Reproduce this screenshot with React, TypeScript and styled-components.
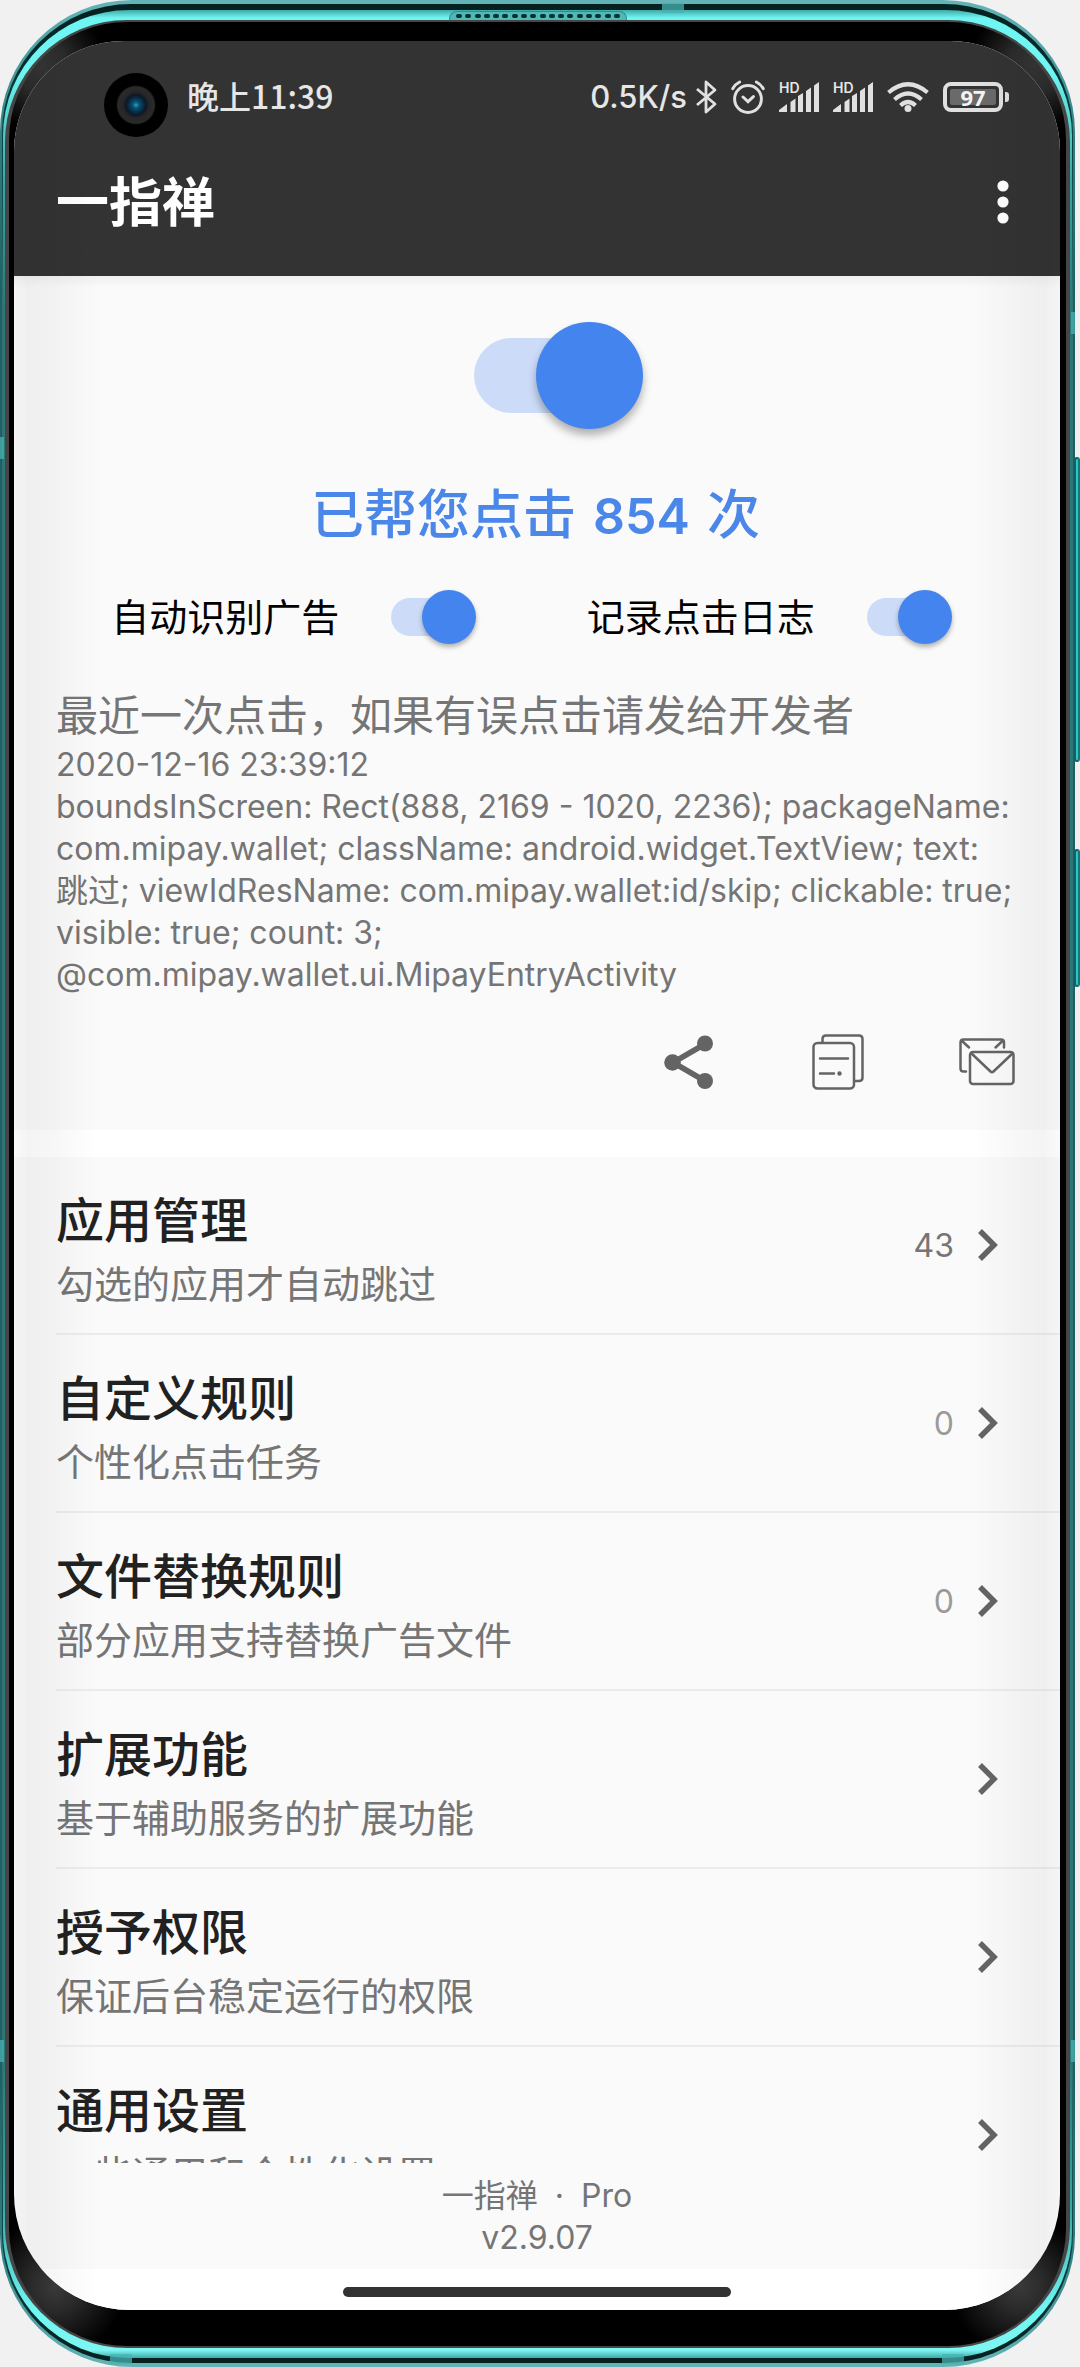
import React from "react";
import styled, { createGlobalStyle, css } from "styled-components";

const GlobalStyle = createGlobalStyle`
  * { box-sizing: border-box; }
  body {
    margin: 0;
    background: #f1f1f1;
    font-family: "Inter", "Noto Sans CJK SC", sans-serif;
    color: #757575;
  }
`;

/* ---------- device shell ---------- */

const Device = styled.div`
  position: relative;
  height: 100vh;
  padding-right: 5px;
  overflow: hidden;
`;

const Rim = styled.div`
  height: 100%;
  padding: 4px 2px;
  border-radius: 132px;
  background: linear-gradient(#62b4b7, #2f7f80 140px, #1f6061 300px, #1f6061 calc(100% - 300px), #2f7f80 calc(100% - 120px), #62b4b7);
`;

const Groove = styled.div`
  height: 100%;
  padding: 6px 1px 5px;
  border-radius: 129px;
  background: linear-gradient(#05201f, #0d4746 160px, #2f7375 300px, #2f7375 calc(100% - 300px), #0d4746 calc(100% - 140px), #05201f);
`;

const Gloss = styled.div`
  height: 100%;
  padding: 10px 2px;
  border-radius: 126px;
  background: linear-gradient(#3fa9a8, #6ff6f3 8px, #6ff6f3 60px, #37a9a8 170px, #2b7779 300px, #2b7779 calc(100% - 300px), #37a9a8 calc(100% - 150px), #6ff6f3 calc(100% - 50px), #7ef6f2 calc(100% - 8px), #3fa9a8);
`;

const Edge = styled.div`
  height: 100%;
  padding: 2px 4px;
  border-radius: 122px;
  background: #464646;
`;

const Bezel = styled.div`
  height: 100%;
  padding: 19px 6px 36px 5px;
  border-radius: 118px;
  background:
    radial-gradient(circle at 32px 44px, #333 0, #2a2a2a 26px, transparent 64px),
    radial-gradient(circle at calc(100% - 32px) 44px, #333 0, #2a2a2a 26px, transparent 64px),
    radial-gradient(circle at 46px calc(100% - 60px), #3a3a3a 0, #2a2a2a 24px, transparent 70px),
    radial-gradient(circle at calc(100% - 46px) calc(100% - 60px), #3a3a3a 0, #2a2a2a 24px, transparent 70px),
    #000;
`;

const Screen = styled.div`
  position: relative;
  display: flex;
  flex-direction: column;
  height: 100%;
  overflow: hidden;
  border-radius: 110px 110px 116px 116px;
  background: #fafafa;

  &::after {
    content: "";
    position: absolute;
    inset: 0;
    pointer-events: none;
    background:
      linear-gradient(to right, rgba(0, 0, 0, 0.02), rgba(0, 0, 0, 0.045) 14px, rgba(0, 0, 0, 0.03) 40px, transparent 84px),
      linear-gradient(to left, rgba(0, 0, 0, 0.02), rgba(0, 0, 0, 0.045) 16px, rgba(0, 0, 0, 0.03) 40px, transparent 88px);
  }
`;

const Camera = styled.div`
  position: absolute;
  z-index: 1;
  top: 32px;
  left: 90px;
  width: 64px;
  height: 64px;
  border-radius: 50%;
  background: radial-gradient(circle, #2aa4c8 0, #0b5573 3px, #06304a 7px, #0d1826 10px, #262626 13px, #2b2b2b 18px, #000 20px);
`;

const SideKey = styled.div<{ $top: string; $height: string }>`
  position: absolute;
  right: 0;
  top: ${(p) => p.$top};
  width: 6px;
  height: ${(p) => p.$height};
  border: 2px solid #0f6366;
  border-right-color: #11777a;
  border-radius: 3px;
  background: #2fc4c5;
`;

const Antenna = styled.div<{ $side: "left" | "right" | "top" | "bottom"; $at: string }>`
  position: absolute;
  background: rgba(72, 178, 178, 0.75);
  ${(p) =>
    p.$side === "left" || p.$side === "right"
      ? css`
          ${p.$side}: ${p.$side === "right" ? "5px" : "0"};
          top: ${p.$at};
          width: 4px;
          height: 22px;
        `
      : css`
          ${p.$side}: 3px;
          left: ${p.$at};
          width: 22px;
          height: 10px;
        `}
`;

const Earpiece = styled.div`
  position: absolute;
  top: 11px;
  left: calc(50% - 91px);
  width: 178px;
  height: 9px;
  padding: 2px 6px;
  display: flex;
  justify-content: space-between;
  border-radius: 8px 8px 0 0;
  border: 1px solid #2a8f90;
  border-bottom: 0;
  background: #4fb9b8;
`;

const Hole = styled.i`
  width: 6px;
  height: 4px;
  border-radius: 2px;
  background: #06302f;
`;

/* ---------- status and title bars ---------- */

const TopBars = styled.header`
  background: #333;
  color: #fff;
`;

const StatusBar = styled.div`
  display: flex;
  align-items: center;
  justify-content: space-between;
  height: 88px;
  padding: 24px 51px 0 173px;
  color: #e6e6e6;
`;

const Clock = styled.time`
  padding-bottom: 4px;
  font: 500 32px/40px "Noto Sans CJK SC", sans-serif;
`;

const StatusIcons = styled.div`
  display: flex;
  align-items: center;
  gap: 14px;
`;

const Speed = styled.span`
  margin-right: -6px;
  font-size: 31px;
  line-height: 40px;
  font-weight: 500;
`;

const Signal = styled.span`
  position: relative;
  display: flex;

  span {
    position: absolute;
    top: 0;
    left: 0;
    font-size: 14px;
    line-height: 12px;
    font-weight: 600;
  }
`;

const Battery = styled.span`
  display: flex;
  align-items: center;
  gap: 2px;

  &::after {
    content: "";
    width: 4px;
    height: 10px;
    border-radius: 0 3px 3px 0;
    background: #e0e0e0;
  }
`;

const BatteryBody = styled.span`
  width: 60px;
  height: 30px;
  padding: 3px;
  border: 4px solid #e0e0e0;
  border-radius: 8px;
`;

const BatteryLevel = styled.span`
  display: block;
  height: 16px;
  border-radius: 2px;
  background: #6a6a6a;
  color: #f4f4f4;
  font: 700 22px/16px "Noto Sans", sans-serif;
  text-align: center;
`;

const TitleBar = styled.div`
  display: flex;
  align-items: center;
  justify-content: space-between;
  height: 147px;
  padding: 0 41px 0 42px;
`;

const AppTitle = styled.h1`
  margin: 0;
  font-size: 53px;
  line-height: 72px;
  font-weight: 600;
`;

const IconButton = styled.button`
  display: grid;
  place-items: center;
  width: 56px;
  height: 56px;
  padding: 0;
  border: 0;
  background: none;
  color: #646464;

  svg { display: block; }
`;

const MenuButton = styled(IconButton)`
  width: 32px;
  color: #fff;
`;

/* ---------- summary ---------- */

const Summary = styled.section`
  padding: 46px 45px 40px 42px;
  background: linear-gradient(#f0f0f0, #fafafa 12px);
`;

const Switch = styled.input<{ $size: number }>`
  appearance: none;
  position: relative;
  flex: none;
  display: block;
  width: ${(p) => Math.round(p.$size * 1.58)}px;
  height: ${(p) => p.$size}px;
  margin: 0;

  &::before {
    content: "";
    position: absolute;
    top: 15%;
    left: 0;
    width: 80%;
    height: 70%;
    border-radius: 999px;
    background: #ccdcf8;
  }

  &::after {
    content: "";
    position: absolute;
    top: 0;
    right: 0;
    width: ${(p) => p.$size}px;
    height: ${(p) => p.$size}px;
    border-radius: 50%;
    background: #4484ee;
    box-shadow: 0 ${(p) => Math.round(p.$size / 18)}px ${(p) => Math.round(p.$size / 12)}px rgba(0, 0, 0, 0.3);
  }
`;

const MainSwitch = styled.label`
  display: flex;
  justify-content: center;
  padding-left: 46px;
`;

const Total = styled.p`
  margin: 50px 0 0;
  color: #4a87e8;
  font-size: 53px;
  line-height: 72px;
  font-weight: 500;
  text-align: center;

  strong {
    padding: 0 3px;
    font-size: 50px;
    font-weight: 600;
  }
`;

const Options = styled.div`
  display: grid;
  grid-template-columns: 1fr 1fr;
  margin: 38px 8px 0 0;
`;

const Option = styled.label`
  display: flex;
  align-items: center;
  justify-content: center;
  gap: 52px;
  color: #000;
  font-size: 38px;
  line-height: 54px;
`;

const LogTitle = styled.h2`
  margin: 44px 0 0;
  font-size: 42px;
  line-height: 56px;
  font-weight: 400;
`;

const LogText = styled.p`
  margin: 0;
  font-size: 32px;
  line-height: 42px;
  overflow-wrap: break-word;
`;

const Actions = styled.div`
  display: flex;
  justify-content: flex-end;
  gap: 93px;
  margin-top: 38px;
`;

/* ---------- menu ---------- */

const Menu = styled.nav`
  flex: 1;
  min-height: 0;
  overflow: hidden;
  border-top: 27px solid #fff;
`;

const Row = styled.a`
  display: flex;
  align-items: center;
  height: 178px;
  margin-left: 42px;
  padding-right: 62px;
  border-bottom: 2px solid #ececec;
  text-decoration: none;
  color: #757575;
`;

const RowText = styled.span`
  flex: 1;
  display: grid;
  gap: 9px;
  padding-top: 8px;
`;

const RowTitle = styled.span`
  color: #212121;
  font-size: 48px;
  line-height: 60px;
  font-weight: 500;
`;

const RowHint = styled.span`
  font-size: 38px;
  line-height: 48px;
`;

const Count = styled.span<{ $empty: boolean }>`
  padding-top: 2px;
  margin-right: 24px;
  font-size: 32px;
  line-height: 42px;
  color: ${(p) => (p.$empty ? "#9a9a9a" : "#757575")};
`;

/* ---------- footer ---------- */

const Footer = styled.footer`
  padding: 12px 0 10px;
  font-size: 32px;
  line-height: 42px;
  text-align: center;
`;

const Dot = styled.span`
  padding: 0 8px;
`;

const GestureBar = styled.div`
  display: flex;
  justify-content: center;
  height: 41px;
  padding-top: 18px;
  background: #fff;

  &::before {
    content: "";
    width: 37%;
    height: 10px;
    border-radius: 5px;
    background: #333;
  }
`;

/* ---------- icons ---------- */

const Bluetooth = () => (
  <svg width="22" height="34" viewBox="0 0 22 34" fill="none" stroke="#e0e0e0" strokeWidth="2.8" strokeLinejoin="round">
    <path d="M2 9l18 15-9 8V2l9 8L2 25" />
  </svg>
);

const Alarm = () => (
  <svg width="34" height="34" viewBox="0 0 34 34" fill="none" stroke="#e0e0e0" strokeWidth="3" strokeLinecap="round">
    <circle cx="17" cy="19" r="13.4" />
    <path d="M12 17l5 4.6 5.4-5M1.8 8.6Q4.4 4 8.6 2M32.2 8.6Q29.6 4 25.4 2" />
  </svg>
);

const SignalBars = () => (
  <Signal>
    <span>HD</span>
    <svg width="40" height="30" viewBox="0 0 40 30" fill="#e0e0e0">
      <path d="M0 30v-2l8-6v8zM11.500 30V20l5-3.500v13.500zM19 30V14l5-3v19zM27 30V9l5-3.500v24.500zM35 30V3.500l5-3.500v30z" />
    </svg>
  </Signal>
);

const Wifi = () => (
  <svg width="42" height="30" viewBox="0 0 42 30" fill="none" stroke="#e0e0e0" strokeWidth="4.2">
    <path d="M1.500 10.500Q21-6 40.500 10.500M7.500 17.500Q21 5.500 34.500 17.500M13.500 23.500Q21 16.500 28.500 23.500" />
    <circle cx="21" cy="26.500" r="3.500" fill="#e0e0e0" stroke="none" />
  </svg>
);

const More = () => (
  <svg width="12" height="46" viewBox="0 0 12 46" fill="currentColor">
    <circle cx="6" cy="6" r="5.600" />
    <circle cx="6" cy="22" r="5.600" />
    <circle cx="6" cy="38" r="5.600" />
  </svg>
);

const Share = () => (
  <svg width="50" height="56" viewBox="0 0 50 56" fill="currentColor" stroke="currentColor">
    <path d="M41 10L9 28.500 41 47" fill="none" strokeWidth="5.500" />
    <circle cx="41" cy="9.500" r="8" stroke="none" />
    <circle cx="8.500" cy="28.500" r="8.300" stroke="none" />
    <circle cx="41" cy="47" r="8" stroke="none" />
  </svg>
);

const Copy = () => (
  <svg width="52" height="56" viewBox="0 0 52 56" fill="none" stroke="currentColor" strokeWidth="2.500" strokeLinecap="round">
    <rect x="1.500" y="9" width="40.500" height="45.500" rx="4" />
    <path d="M10.500 8.500V5q0-3.500 3.500-3.500h33q3.500 0 3.500 3.500v38.500q0 3.500-3.500 3.500h-4M8 24.500h28M8 39.500h14" />
    <circle cx="27.500" cy="39.500" r="2.200" fill="currentColor" stroke="none" />
  </svg>
);

const Mail = () => (
  <svg width="56" height="48" viewBox="0 0 56 48" fill="none" stroke="currentColor" strokeWidth="2.500" strokeLinecap="round">
    <rect x="11" y="14" width="43.500" height="32" rx="3" />
    <path d="M12 15l19.500 18.500q1.500 1.400 3 0L54 15M7 33.500H4.500q-3 0-3-3V4.500q0-3 3-3h37.500q3 0 3 3v5M2.500 2.500l7.500 7M44 2.500l-7.500 7" />
  </svg>
);

const Chevron = () => (
  <svg width="20" height="32" viewBox="0 0 20 32" fill="none" stroke="#646464" strokeWidth="5.500">
    <path d="M2 2l14 14L2 30" />
  </svg>
);

type MenuEntry = { title: string; hint: string; count?: number };

const entries: MenuEntry[] = [
  { title: "应用管理", hint: "勾选的应用才自动跳过", count: 43 },
  { title: "自定义规则", hint: "个性化点击任务", count: 0 },
  { title: "文件替换规则", hint: "部分应用支持替换广告文件", count: 0 },
  { title: "扩展功能", hint: "基于辅助服务的扩展功能" },
  { title: "授予权限", hint: "保证后台稳定运行的权限" },
  { title: "通用设置", hint: "一些通用和个性化设置" },
];

export default function App() {
  return (
    <Device>
      <GlobalStyle />
      <SideKey $top="19.300%" $height="12.900%" />
      <SideKey $top="35.850%" $height="5.850%" />
      <Rim>
        <Groove>
          <Gloss>
            <Edge>
              <Bezel>
                <Screen>
                  <Camera />
                  <TopBars>
                    <StatusBar>
                      <Clock>晚上11:39</Clock>
                      <StatusIcons>
                        <Speed>0.5K/s</Speed>
                        <Bluetooth />
                        <Alarm />
                        <SignalBars />
                        <SignalBars />
                        <Wifi />
                        <Battery>
                          <BatteryBody>
                            <BatteryLevel>97</BatteryLevel>
                          </BatteryBody>
                        </Battery>
                      </StatusIcons>
                    </StatusBar>
                    <TitleBar>
                      <AppTitle>一指禅</AppTitle>
                      <MenuButton aria-label="更多">
                        <More />
                      </MenuButton>
                    </TitleBar>
                  </TopBars>

                  <Summary>
                    <MainSwitch>
                      <Switch type="checkbox" role="switch" aria-label="服务开关" defaultChecked $size={107} />
                    </MainSwitch>
                    <Total>
                      已帮您点击 <strong>854</strong> 次
                    </Total>
                    <Options>
                      <Option>
                        自动识别广告
                        <Switch type="checkbox" role="switch" defaultChecked $size={54} />
                      </Option>
                      <Option>
                        记录点击日志
                        <Switch type="checkbox" role="switch" defaultChecked $size={54} />
                      </Option>
                    </Options>
                    <LogTitle>最近一次点击，如果有误点击请发给开发者</LogTitle>
                    <LogText>2020-12-16 23:39:12</LogText>
                    <LogText>
                      boundsInScreen: Rect(888, 2169 - 1020, 2236); packageName: com.mipay.wallet; className:
                      android.widget.TextView; text: 跳过; viewIdResName: com.mipay.wallet:id/skip; clickable: true;
                      visible: true; count: 3;
                      <br />
                      @com.mipay.wallet.ui.MipayEntryActivity
                    </LogText>
                    <Actions>
                      <IconButton aria-label="分享">
                        <Share />
                      </IconButton>
                      <IconButton aria-label="复制">
                        <Copy />
                      </IconButton>
                      <IconButton aria-label="邮件">
                        <Mail />
                      </IconButton>
                    </Actions>
                  </Summary>

                  <Menu>
                    {entries.map((e) => (
                      <Row key={e.title} href="#">
                        <RowText>
                          <RowTitle>{e.title}</RowTitle>
                          <RowHint>{e.hint}</RowHint>
                        </RowText>
                        {e.count !== undefined && <Count $empty={e.count === 0}>{e.count}</Count>}
                        <Chevron />
                      </Row>
                    ))}
                  </Menu>

                  <Footer>
                    <div>
                      一指禅 <Dot>·</Dot> Pro
                    </div>
                    <div>v2.9.07</div>
                  </Footer>
                  <GestureBar />
                </Screen>
              </Bezel>
            </Edge>
          </Gloss>
        </Groove>
      </Rim>
      <Antenna $side="top" $at="61.300%" />
      <Antenna $side="bottom" $at="10.200%" />
      <Antenna $side="bottom" $at="87.200%" />
      <Antenna $side="left" $at="18.450%" />
      <Antenna $side="left" $at="86.200%" />
      <Antenna $side="right" $at="13.200%" />
      <Antenna $side="right" $at="86.200%" />
      <Earpiece>
        {Array.from({ length: 18 }, (_, i) => (
          <Hole key={i} />
        ))}
      </Earpiece>
    </Device>
  );
}
